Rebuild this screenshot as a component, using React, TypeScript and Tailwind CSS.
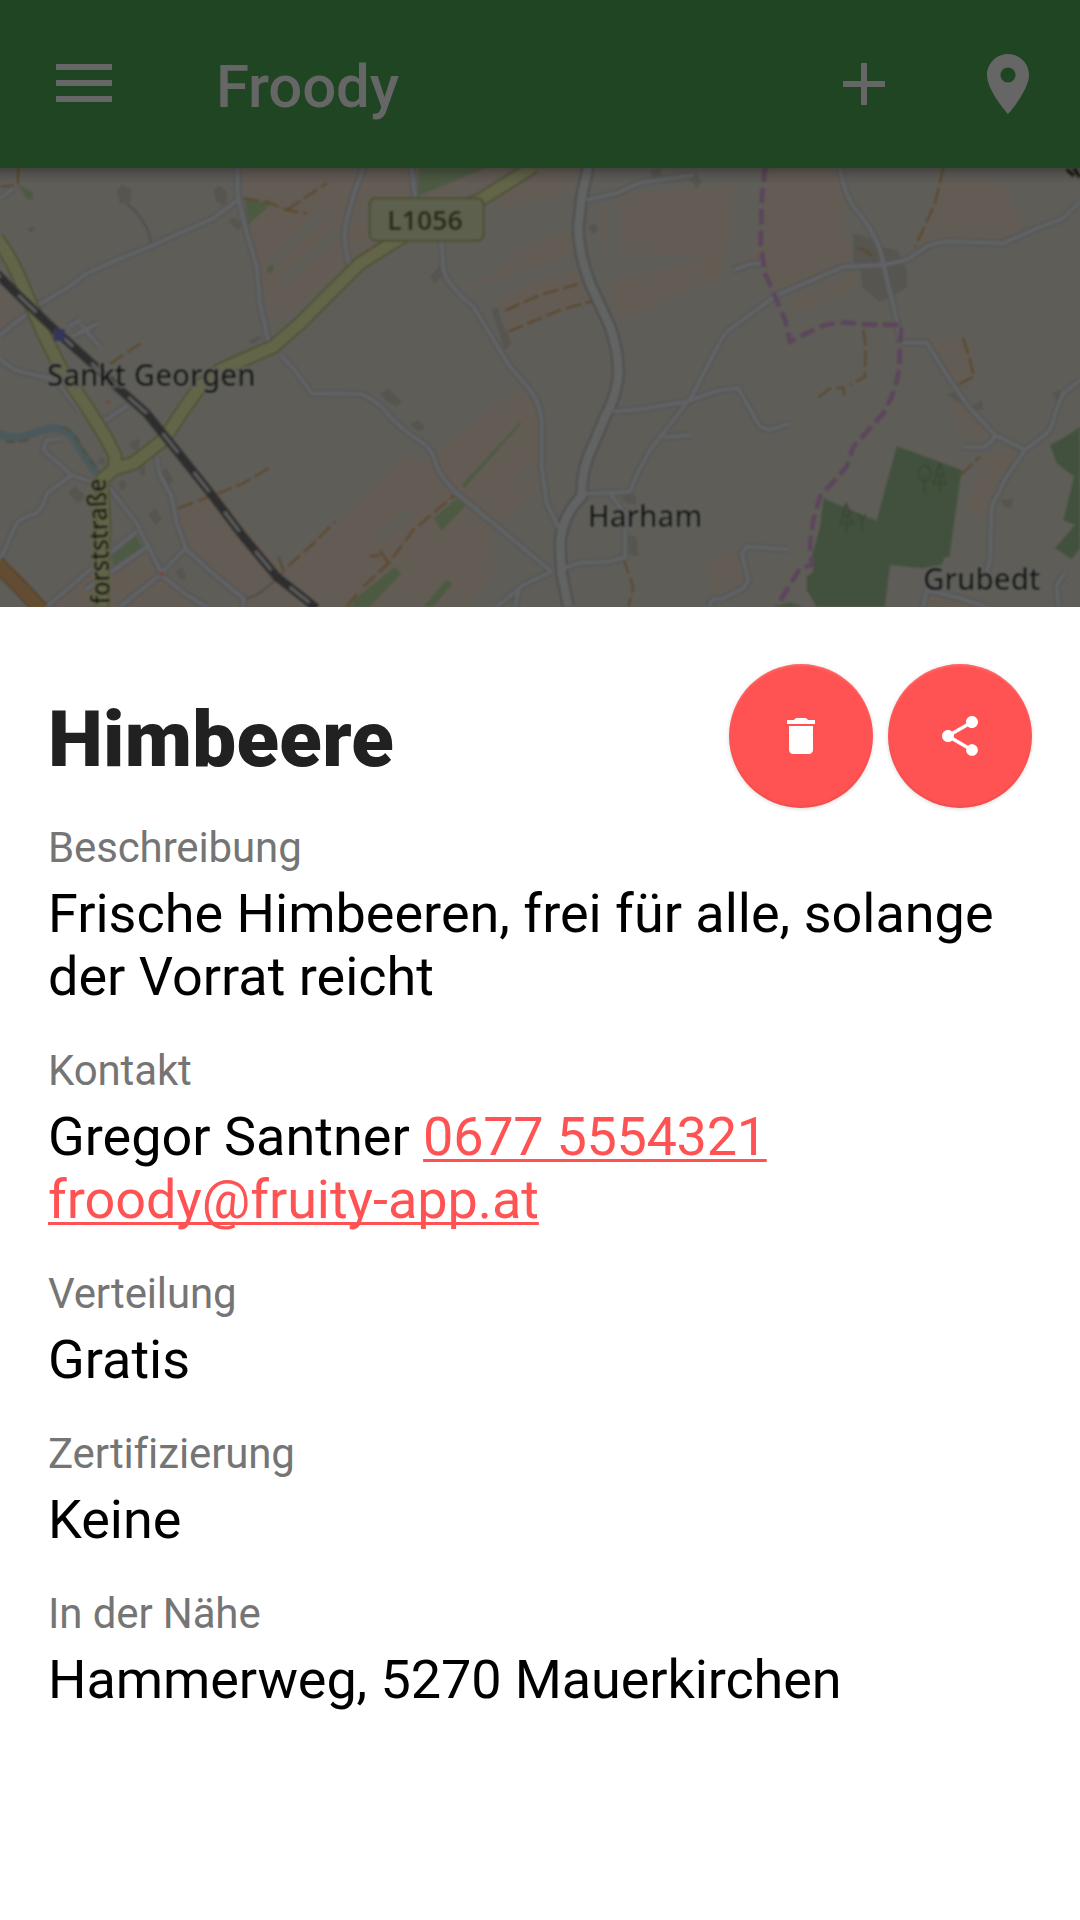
import React from "react";

const LAND = "#5e5d59";
const FARM = "#645b54";
const FOREST = "#43513d";
const MEADOW = "#4d5a42";
const BUILDING = "#575450";

const farms = [
  "M720 24H1740L1720 90 1500 150 1500 60 1380 110 1250 180 1080 290 820 500 780 350Z",
  "M1370 390 1470 350 1550 280 1640 230 1735 215 1735 280 1560 330 1480 370Z",
  "M0 380 66 452 0 510Z",
  "M530 1045 620 1012 660 1000 930 1340H720L560 1170Z",
  "M130 1340 280 1210 440 1160 490 1240 620 1340Z",
  "M850 1230 1080 1022 1210 880 1260 915 1560 680 1612 720 1625 960 1545 1060 1470 1125 1485 1230 1400 1340H960Z",
  "M1500 410 1740 320 1780 420 1530 515Z",
  "M1830 360 2160 290 2160 365 2050 390 1940 450 1860 480Z",
  "M1860 100 2200 80 2190 220 2160 350 2100 290 1860 280Z",
  "M1800 130H1820V265H1805Z",
  "M2300 24H2520L2540 120 2530 200 2560 290 2480 330 2330 400 2290 300 2220 300 2290 260Z",
  "M2370 420 2560 335 2580 380 2380 462Z",
  "M2820 60H3005L3030 120 3080 195 3000 240 2750 262Z",
  "M2790 535 2890 535 2925 645 2870 680Z",
  "M2850 745 2900 715 2965 820 2885 832Z",
  "M2950 885 3055 865 2950 1080 2890 1055Z",
  "M2110 1200 2215 1170 2240 1270 2150 1320Z",
  "M2785 1310 2900 1300 2980 1340H2780Z",
];

const meadows = [
  "M735 118 815 130 745 195Z",
  "M1255 24H1455L1370 60 1255 108Z",
  "M335 1180 410 1130 425 1160 340 1218Z",
  "M1300 1075 1380 1008 1408 1025 1325 1112Z",
  "M1060 1320 1185 1220 1205 1240 1110 1340H1060Z",
  "M1270 1340 1340 1258 1358 1272 1300 1340Z",
  "M1385 975 1560 785 1565 790 1392 985Z",
  "M50 70 100 98 100 120 82 118Z",
  "M84 205 102 200 104 212 90 218Z",
  "M800 325 818 312 822 330 805 342Z",
  "M1050 1340 1080 1310V1340Z",
];

const forests = [
  "M2690 858 2885 930 2875 1000 2848 1192 2835 1190 2825 1215 2765 1225 2670 1215 2655 1340H2450L2420 1290 2420 1250 2440 1235 2435 1190 2460 1100 2470 1015 2630 1082Z",
  "M3240 800 3205 825 3150 855 3170 910 3222 950 3190 1080 3225 1095 3165 1165 3215 1198 3240 1165Z",
  "M2320 1340 2370 1328 2410 1340Z",
];

const buildings = [
  "M350 95 365 75 395 90 392 125 360 130Z",
  "M640 90 660 78 682 98 675 135 650 125Z",
  "M685 185 700 172 725 190 715 212Z",
  "M745 545 780 525 785 535 755 552Z",
  "M205 1000 225 978 258 1010 235 1030Z",
  "M445 1065 465 1045 485 1075 468 1095Z",
  "M525 1235 545 1222 560 1250 545 1262Z",
  "M415 925 432 915 438 940 425 948Z",
  "M480 935 500 925 522 965 505 972Z",
  "M355 965 375 960 378 985 360 990Z",
  "M385 850 420 835 415 870 395 865Z",
  "M290 905 310 890 315 915Z",
  "M1140 700 1165 688 1205 725 1190 740 1160 722Z",
  "M1230 795 1255 780 1275 805 1255 815Z",
  "M1290 350 1320 318 1330 340 1305 372Z",
  "M1475 450 1495 440 1500 475 1535 550 1515 570Z",
  "M1950 30 1980 24 1985 50 1955 50Z",
  "M2070 60 2090 40 2105 65 2090 85Z",
  "M1765 200 1785 190 1795 210 1775 222Z",
  "M1885 1125 1910 1130 1915 1190 1890 1185Z",
  "M1860 1005 1905 1005 1910 1035 1880 1030Z",
  "M2195 320 2215 312 2220 335 2200 340Z",
  "M2560 222 2600 230 2640 260 2690 270 2720 330 2720 380 2690 400 2640 425 2590 385 2580 325 2560 300Z",
  "M2840 705 2880 690 2915 740 2945 720 2950 750 2910 745Z",
  "M3005 1020 3040 1015 3035 1045 3010 1040Z",
  "M3155 700 3180 690 3175 725Z",
];

const minorRoads = [
  "M110 438 200 385 260 340 350 300 450 260 560 210 640 175 715 118",
  "M712 20 714 110 735 200 770 320 780 430 808 560",
  "M0 525 70 470 115 438",
  "M0 595Q30 630 80 640L170 660 240 755",
  "M300 560 240 490M215 530 295 490M205 500 240 480",
  "M310 785 385 735",
  "M840 585 880 625 935 700 1080 702Q1110 710 1150 745 1190 800 1270 850 1300 870 1310 920 1330 960 1370 1000L1480 1090 1600 1190 1655 1235",
  "M1090 24Q1060 100 1040 180 1025 240 1050 320",
  "M1235 24 1245 110 1325 250 1330 330Q1345 380 1420 440L1530 620 1590 690Q1620 730 1625 780L1625 920 1640 1030 1680 1110",
  "M0 1200 50 1090Q70 1070 110 1060 130 1040 140 1000L215 945 330 985 410 1090 450 1170 490 1250 560 1305 620 1340",
  "M215 945 130 870 140 840 185 835",
  "M0 115 40 85",
  "M140 1340 280 1220 410 1115",
  "M255 1290 450 1155",
  "M360 1340 480 1245 560 1160",
  "M470 890 480 945 515 1010 530 1090 560 1170 650 1250 730 1315 730 1340",
  "M1760 120 1850 100 1920 68 2080 45",
  "M1840 755 1920 748 2060 725 2160 690",
  "M2160 545 2075 710 1950 870 1910 945 1890 995 1745 1002",
  "M1830 1000 1875 1060 1875 1190 1830 1205 1740 1208 1690 1225",
  "M1990 832 2070 825",
  "M1655 1235 1570 1275 1490 1340M1560 1280 1545 1340",
  "M2160 545 2180 515 2330 405 2450 355 2530 320 2650 315 2720 300 2780 260Q2820 240 2870 245L3010 250 3110 205 3190 175 3240 125",
  "M2520 24Q2530 90 2560 140 2640 230 2650 315L2690 480 2700 548",
  "M2700 548H2780L2850 660 2910 745 2985 825 3075 870 3140 820Q3160 800 3165 760L3190 700 3240 660",
  "M2200 330 2250 312 2290 310",
  "M2160 690 2215 685 2240 730 2280 800 2310 810 2370 790",
  "M2985 825Q2970 865 2930 862L2890 860",
  "M3075 870 3020 950 2975 1040 2970 1200 2960 1240",
  "M2365 1168 2240 1160 2225 1180 2245 1260 2230 1285 2160 1320",
  "M3195 1240 3170 1275 3175 1340",
  "M2770 1340 2780 1290 2880 1315 2960 1340",
  "M2130 1340Q2130 1315 2160 1315",
];

const majorRoads = [
  "M1765 20 1745 110 1735 200Q1735 280 1770 370L1830 500Q1855 570 1855 640 1850 710 1815 770L1765 890Q1745 940 1745 1010 1690 1060 1680 1150L1685 1240 1705 1340",
];

const yellowRoads = [
  "M-10 235Q40 300 78 400L130 520 190 640 260 740 310 820 345 885 345 925",
  "M305 1340 312 1100 305 960 345 925 400 910 490 840 550 750 600 680 660 630 740 595 820 560 900 490 980 410 1080 310 1200 235 1300 175 1440 120 1600 20",
];

const tracks = [
  "M730 115 800 125 860 150 920 160M860 150 980 70",
  "M330 612 430 545",
  "M535 1045 640 1005 730 970 810 922",
  "M835 1190 850 1230 930 1160 1005 1085",
  "M1090 1280 1165 1210 1240 1110 1370 1000M1165 1210 1140 1170M1140 1185 1110 1190",
  "M1515 452 1620 405 1760 365M1525 515 1680 450 1790 420",
  "M2830 24 2805 130 2745 262",
  "M2575 265Q2620 275 2625 310",
  "M2585 493H2690M2590 510 2597 560 2595 650 2550 675M2455 712 2490 685 2530 682 2532 710",
  "M2890 535 2910 600 2922 650 2880 670 2900 685",
  "M2882 945 2940 890",
  "M1870 1195 1900 1280 1885 1340",
  "M55 24 53 75 0 80",
  "M1040 1340 1080 1290",
];

const boundary =
  "M2295 20 2285 120 2282 250 2295 340 2330 420 2355 480 2370 545 2460 500Q2520 480 2580 493L2705 495 2700 550 2698 620Q2690 690 2650 760L2560 860 2540 920 2460 1010 2440 1080 2430 1150 2435 1215 2400 1225 2330 1340";

const railway =
  "M-10 340 60 410 170 515 270 605 350 680 440 760 520 860 620 985 730 1130 830 1250 950 1345";

function Strokes({ paths, color, width, dash }: { paths: string[]; color: string; width: number; dash?: string }) {
  return (
    <g fill="none" stroke={color} strokeWidth={width} strokeDasharray={dash} strokeLinejoin="round">
      {paths.map((d) => (
        <path key={d} d={d} />
      ))}
    </g>
  );
}

function Fills({ paths, color }: { paths: string[]; color: string }) {
  return (
    <g fill={color}>
      {paths.map((d) => (
        <path key={d} d={d} />
      ))}
    </g>
  );
}

function Tree({ x, y, round }: { x: number; y: number; round?: boolean }) {
  return (
    <g transform={`translate(${x} ${y})`} fill="none" stroke="#394732" strokeWidth="5">
      <path d="M0 30V88" />
      {round ? <ellipse cx="0" cy="26" rx="18" ry="24" /> : <path d="M0 0 -12 30H-6L-20 58H20L6 30H12Z" />}
    </g>
  );
}

function MapView() {
  return (
    <svg className="block h-[439px] w-full" viewBox="0 24 3240 1317" preserveAspectRatio="none">
      <defs>
        <filter id="soft" x="0" y="0" width="1" height="1">
          <feGaussianBlur stdDeviation="2.8" />
        </filter>
        <linearGradient id="shade" x1="0" y1="0" x2="0" y2="1">
          <stop offset="0" stopColor="#000" stopOpacity="0.28" />
          <stop offset="0.5" stopColor="#000" stopOpacity="0.1" />
          <stop offset="1" stopColor="#000" stopOpacity="0" />
        </linearGradient>
      </defs>
      <rect y="0" width="3240" height="1345" fill={LAND} />
      <g filter="url(#soft)">
        <rect x="-20" y="-20" width="3280" height="1400" fill={LAND} />
        <Fills paths={farms} color={FARM} />
        <g stroke={LAND} strokeWidth="26" fill="none">
          <path d="M800 320 960 170M840 370 1020 215M1080 1340 1140 1270M1560 965 1610 925M1130 1130 1230 1060" />
        </g>
        <Fills paths={meadows} color={MEADOW} />
        <Fills paths={forests} color={FOREST} />
        <Fills paths={buildings} color={BUILDING} />
        <path d="M-10 820Q40 840 85 825L150 805Q210 800 235 860L290 940" fill="none" stroke="#4c595b" strokeWidth="24" />
        <path d="M15 845Q60 850 90 838M190 800Q225 815 250 870L290 925" fill="none" stroke="#4d4c36" strokeWidth="5" strokeDasharray="30 12" />
        <path d="M330 1000 400 1080" stroke="#4f6064" strokeWidth="6" />
        <Strokes paths={tracks} color="#5c4a2a" width={7} dash="48 14" />
        <path d="M380 130Q450 190 452 250M740 1315Q780 1310 850 1235" stroke="#51504e" strokeWidth="7" fill="none" />
        <Strokes paths={minorRoads} color="#525353" width={22} />
        <Strokes paths={majorRoads} color="#484949" width={38} />
        <Strokes paths={minorRoads} color="#616264" width={14} />
        <Strokes paths={majorRoads} color="#626364" width={28} />
        <path d="M-10 1210 50 1270 125 1350" stroke="#4f3d21" strokeWidth="48" fill="none" />
        <path d="M-10 1210 50 1270 125 1350" stroke="#644e33" strokeWidth="40" fill="none" />
        <Strokes paths={yellowRoads} color="#4b4e2a" width={44} />
        <Strokes paths={yellowRoads} color="#636548" width={35} />
        <path d={boundary} fill="none" stroke="#5b445b" strokeWidth="14" strokeDasharray="46 18" />
        <path d={railway} fill="none" stroke="#2f2f2f" strokeWidth="27" />
        <path d={railway} fill="none" stroke="#5c5c5c" strokeWidth="9" strokeDasharray="75 75" strokeDashoffset="-92" />
        <rect x="161" y="507" width="33" height="36" fill="#35365a" />
        <path d="M318 722h12v10h-12zM478 1236h14v12h-14z" fill="#774340" />
        <Tree x={2774} y={915} round />
        <Tree x={2819} y={912} />
        <Tree x={2539} y={1032} />
        <path d="M2575 1062 2586 1085 2597 1062M2586 1085V1117" fill="none" stroke="#394732" strokeWidth="5" />

        <rect x="1109" y="115" width="342" height="127" rx="18" fill="#5d604d" stroke="#4a502d" strokeWidth="6" />
        <g
          fontFamily="'Noto Sans', sans-serif"
          fontWeight="500"
          fill="#141414"
          stroke="#62615d"
          strokeWidth="14"
          strokeOpacity="0.75"
          paintOrder="stroke"
          strokeLinejoin="round"
        >
          <text x="141" y="677" fontSize="90" textLength="626" lengthAdjust="spacingAndGlyphs">Sankt Georgen</text>
          <text x="1763" y="1102" fontSize="90" textLength="344" lengthAdjust="spacingAndGlyphs">Harham</text>
          <text x="2769" y="1290" fontSize="90" textLength="352" lengthAdjust="spacingAndGlyphs">Grubedt</text>
          <text transform="translate(330 1332) rotate(-92)" fontSize="78" textLength="378" lengthAdjust="spacingAndGlyphs" stroke="#636548">
            forststraße
          </text>
        </g>
        <text x="1162" y="211" fontFamily="'Noto Sans', sans-serif" fontWeight="600" fontSize="82" textLength="226" lengthAdjust="spacingAndGlyphs" fill="#262c17">
          L1056
        </text>
        <path d="M3200 28 3222 48M3222 24 3240 52" stroke="#1c1f12" strokeWidth="12" />
      </g>
      <rect y="24" width="3240" height="46" fill="url(#shade)" />
    </svg>
  );
}

function AppBar() {
  return (
    <header className="flex h-[168px] shrink-0 items-center bg-[#1f4522] pl-14 pr-9 text-[#666666]">
      <button aria-label="Menü" className="flex w-14 flex-col gap-2.5 pb-0.5">
        <span className="h-1.5 w-full bg-current" />
        <span className="h-1.5 w-full bg-current" />
        <span className="h-1.5 w-full bg-current" />
      </button>
      <h1 className="ml-[104px] mt-1.5 flex-1 text-[60px] font-medium leading-[70px] tracking-[-0.2px]">Froody</h1>
      <button aria-label="Hinzufügen" className="mr-[72px]">
        <svg className="block size-[72px]" viewBox="0 0 24 24" fill="currentColor">
          <path d="M19 13h-6v6h-2v-6H5v-2h6V5h2v6h6v2z" />
        </svg>
      </button>
      <button aria-label="Standort">
        <svg className="block size-[72px]" viewBox="0 0 24 24" fill="currentColor">
          <path d="M12 2C8.13 2 5 5.13 5 9c0 5.25 7 13 7 13s7-7.75 7-13c0-3.87-3.13-7-7-7zm0 9.5c-1.38 0-2.5-1.12-2.5-2.5s1.12-2.5 2.5-2.5 2.5 1.12 2.5 2.5-1.12 2.5-2.5 2.5z" />
        </svg>
      </button>
    </header>
  );
}

function RoundButton({ label, path }: { label: string; path: string }) {
  return (
    <button
      aria-label={label}
      className="flex size-36 items-center justify-center rounded-full bg-[#ff5252] text-white shadow-[0_1px_4px_rgba(0,0,0,0.15),inset_0_2px_2px_rgba(255,255,255,0.12),inset_0_-2px_2px_rgba(0,0,0,0.06)]"
    >
      <svg className="size-12" viewBox="0 0 24 24" fill="currentColor">
        <path d={path} />
      </svg>
    </button>
  );
}

function Field({ label, children }: { label: string; children: React.ReactNode }) {
  return (
    <section className="flex flex-col gap-2.5">
      <h3 className="text-[42px] leading-[49px] tracking-[-0.12px] text-[#757575]">{label}</h3>
      <p className="text-[54px] leading-[63px] text-black">{children}</p>
    </section>
  );
}

const link = "text-[#ff5252] underline decoration-[3px] underline-offset-[4px] [text-decoration-skip-ink:none]";

export default function App() {
  return (
    <div className="flex h-[1920px] w-[1080px] flex-col overflow-hidden bg-white font-['Roboto',sans-serif]">
      <AppBar />
      <MapView />
      <main className="flex-1 px-12 pt-[57px]">
        <div className="flex items-center justify-between">
          <h2 className="mt-2 text-[78px] font-black leading-[92px] tracking-[0.3px] text-[#212121]">Himbeere</h2>
          <div className="flex gap-[15px]">
            <RoundButton
              label="Löschen"
              path="M6 19c0 1.1.9 2 2 2h8c1.1 0 2-.9 2-2V7H6v12zM19 4h-3.5l-1-1h-5l-1 1H5v2h14V4z"
            />
            <RoundButton
              label="Teilen"
              path="M18 16.08c-.76 0-1.44.3-1.96.77L8.91 12.7c.05-.23.09-.46.09-.7s-.04-.47-.09-.7l7.05-4.11c.54.5 1.25.81 2.04.81 1.66 0 3-1.34 3-3s-1.34-3-3-3-3 1.34-3 3c0 .24.04.47.09.7L8.04 9.81C7.5 9.31 6.79 9 6 9c-1.66 0-3 1.34-3 3s1.34 3 3 3c.79 0 1.5-.31 2.04-.81l7.12 4.16c-.05.21-.08.43-.08.65 0 1.61 1.31 2.92 2.92 2.92 1.61 0 2.92-1.31 2.92-2.92s-1.31-2.92-2.92-2.92z"
            />
          </div>
        </div>
        <div className="mt-[15px] flex flex-col gap-[38px]">
          <Field label="Beschreibung">Frische Himbeeren, frei für alle, solange der Vorrat reicht</Field>
          <Field label="Kontakt">
            Gregor Santner <a className={`${link} tracking-[-0.3px]`}>0677 5554321</a>
            <br />
            <a className={`${link} tracking-[-0.06px]`}>froody@fruity-app.at</a>
          </Field>
          <Field label="Verteilung">Gratis</Field>
          <Field label="Zertifizierung">Keine</Field>
          <Field label="In der Nähe">
            <span className="tracking-[-0.1px]">Hammerweg, 5270 Mauerkirchen</span>
          </Field>
        </div>
      </main>
    </div>
  );
}
